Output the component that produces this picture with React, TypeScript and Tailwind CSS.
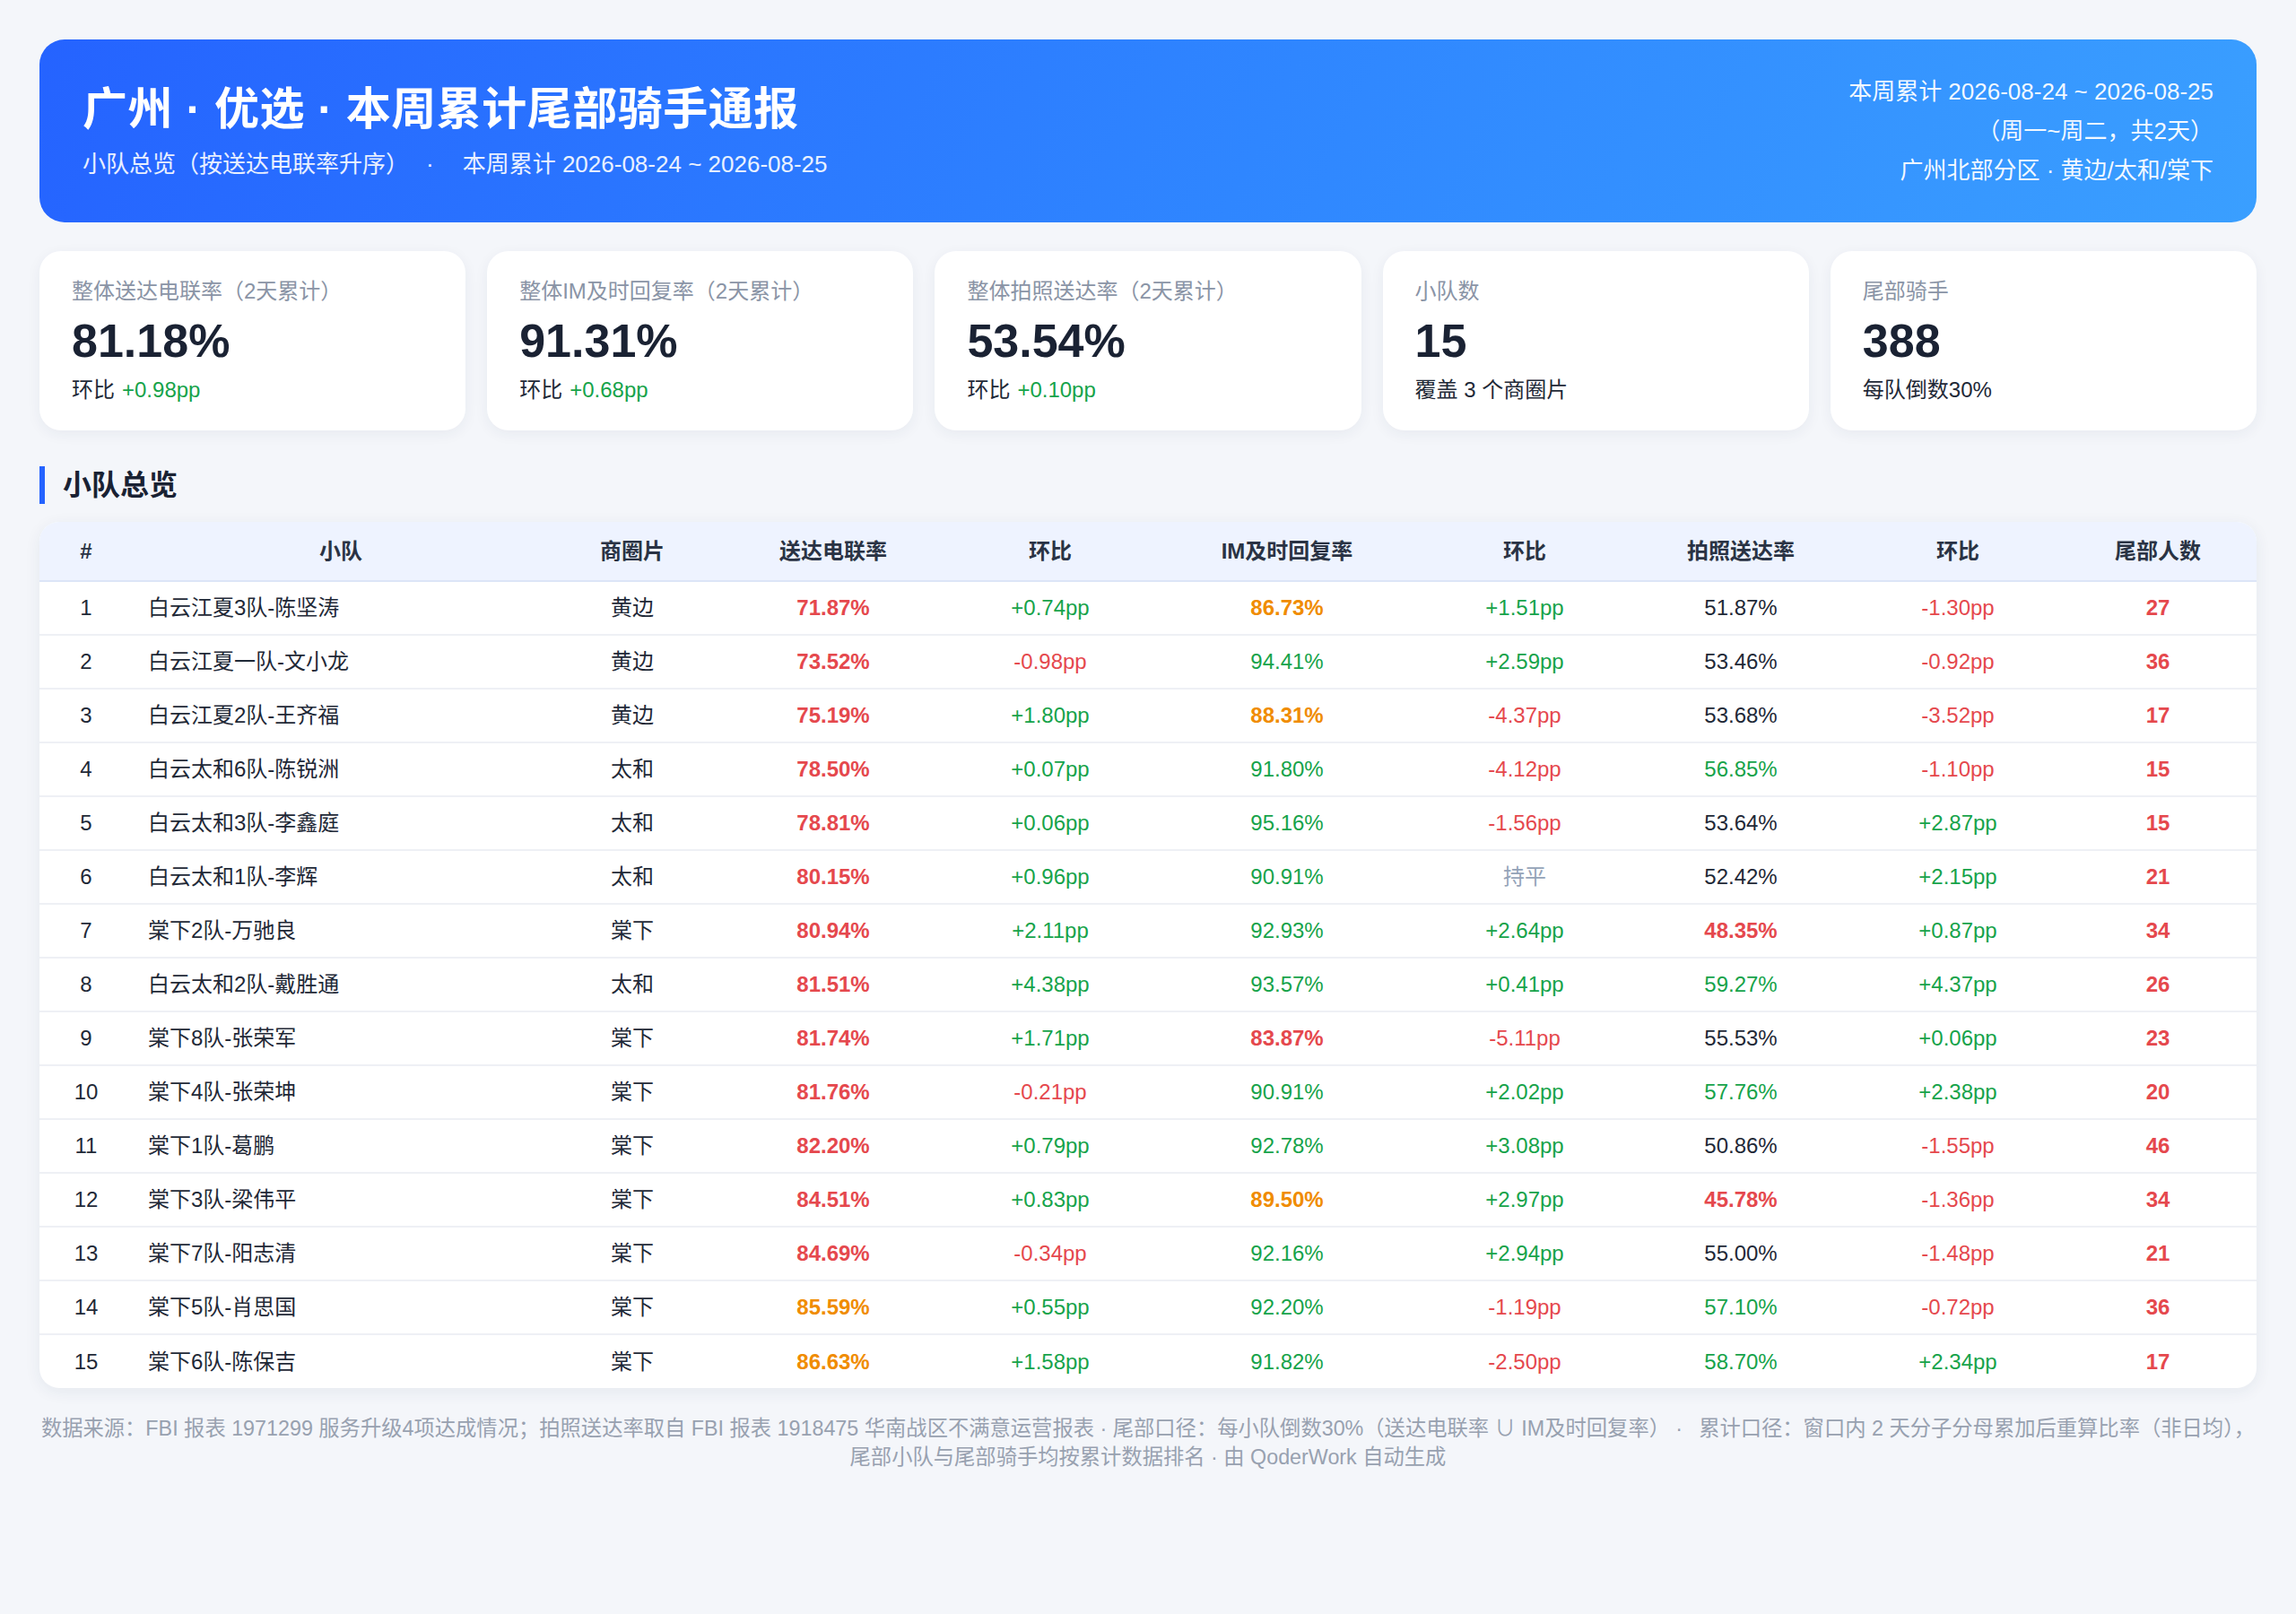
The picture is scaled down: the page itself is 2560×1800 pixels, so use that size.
import React from 'react';

type Row = {
  name: string;
  area: string;
  call: string;
  callMom: string;
  im: string;
  imMom: string;
  photo: string;
  photoMom: string;
  tail: number;
};

const rows: Row[] = [
  { name: '白云江夏3队-陈坚涛', area: '黄边', call: '71.87%', callMom: '+0.74pp', im: '86.73%', imMom: '+1.51pp', photo: '51.87%', photoMom: '-1.30pp', tail: 27 },
  { name: '白云江夏一队-文小龙', area: '黄边', call: '73.52%', callMom: '-0.98pp', im: '94.41%', imMom: '+2.59pp', photo: '53.46%', photoMom: '-0.92pp', tail: 36 },
  { name: '白云江夏2队-王齐福', area: '黄边', call: '75.19%', callMom: '+1.80pp', im: '88.31%', imMom: '-4.37pp', photo: '53.68%', photoMom: '-3.52pp', tail: 17 },
  { name: '白云太和6队-陈锐洲', area: '太和', call: '78.50%', callMom: '+0.07pp', im: '91.80%', imMom: '-4.12pp', photo: '56.85%', photoMom: '-1.10pp', tail: 15 },
  { name: '白云太和3队-李鑫庭', area: '太和', call: '78.81%', callMom: '+0.06pp', im: '95.16%', imMom: '-1.56pp', photo: '53.64%', photoMom: '+2.87pp', tail: 15 },
  { name: '白云太和1队-李辉', area: '太和', call: '80.15%', callMom: '+0.96pp', im: '90.91%', imMom: '持平', photo: '52.42%', photoMom: '+2.15pp', tail: 21 },
  { name: '棠下2队-万驰良', area: '棠下', call: '80.94%', callMom: '+2.11pp', im: '92.93%', imMom: '+2.64pp', photo: '48.35%', photoMom: '+0.87pp', tail: 34 },
  { name: '白云太和2队-戴胜通', area: '太和', call: '81.51%', callMom: '+4.38pp', im: '93.57%', imMom: '+0.41pp', photo: '59.27%', photoMom: '+4.37pp', tail: 26 },
  { name: '棠下8队-张荣军', area: '棠下', call: '81.74%', callMom: '+1.71pp', im: '83.87%', imMom: '-5.11pp', photo: '55.53%', photoMom: '+0.06pp', tail: 23 },
  { name: '棠下4队-张荣坤', area: '棠下', call: '81.76%', callMom: '-0.21pp', im: '90.91%', imMom: '+2.02pp', photo: '57.76%', photoMom: '+2.38pp', tail: 20 },
  { name: '棠下1队-葛鹏', area: '棠下', call: '82.20%', callMom: '+0.79pp', im: '92.78%', imMom: '+3.08pp', photo: '50.86%', photoMom: '-1.55pp', tail: 46 },
  { name: '棠下3队-梁伟平', area: '棠下', call: '84.51%', callMom: '+0.83pp', im: '89.50%', imMom: '+2.97pp', photo: '45.78%', photoMom: '-1.36pp', tail: 34 },
  { name: '棠下7队-阳志清', area: '棠下', call: '84.69%', callMom: '-0.34pp', im: '92.16%', imMom: '+2.94pp', photo: '55.00%', photoMom: '-1.48pp', tail: 21 },
  { name: '棠下5队-肖思国', area: '棠下', call: '85.59%', callMom: '+0.55pp', im: '92.20%', imMom: '-1.19pp', photo: '57.10%', photoMom: '-0.72pp', tail: 36 },
  { name: '棠下6队-陈保吉', area: '棠下', call: '86.63%', callMom: '+1.58pp', im: '91.82%', imMom: '-2.50pp', photo: '58.70%', photoMom: '+2.34pp', tail: 17 },
];

const RED = 'text-[#e5484d] font-bold';
const ORANGE = 'text-[#f08c00] font-bold';
const GREEN = 'text-[#16a34a]';
const DARK = 'text-[#1f2937]';

// 送达电联率 / IM: <85 red, 85-90 orange, else green
function rateClass(v: string) {
  const n = parseFloat(v);
  if (n < 85) return RED;
  if (n < 90) return ORANGE;
  return GREEN;
}

function photoClass(v: string) {
  const n = parseFloat(v);
  if (n < 50) return RED;
  if (n < 56) return DARK;
  return GREEN;
}

function momClass(v: string) {
  if (v.startsWith('+')) return 'text-[#16a34a]';
  if (v.startsWith('-')) return 'text-[#e5484d]';
  return 'text-[#94a3b8]';
}

const stats = [
  { label: '整体送达电联率（2天累计）', value: '81.18%', sub: '环比', delta: '+0.98pp' },
  { label: '整体IM及时回复率（2天累计）', value: '91.31%', sub: '环比', delta: '+0.68pp' },
  { label: '整体拍照送达率（2天累计）', value: '53.54%', sub: '环比', delta: '+0.10pp' },
  { label: '小队数', value: '15', sub: '覆盖 3 个商圈片', delta: '' },
  { label: '尾部骑手', value: '388', sub: '每队倒数30%', delta: '' },
];

const columns = [
  { label: '#', w: 'w-[104px]' },
  { label: '小队', w: 'w-[464px]' },
  { label: '商圈片', w: 'w-[186px]' },
  { label: '送达电联率', w: 'w-[262px]' },
  { label: '环比', w: 'w-[222px]' },
  { label: 'IM及时回复率', w: 'w-[306px]' },
  { label: '环比', w: 'w-[224px]' },
  { label: '拍照送达率', w: 'w-[258px]' },
  { label: '环比', w: 'w-[226px]' },
  { label: '尾部人数', w: 'w-[220px]' },
];

export default function App() {
  return (
    <div className="min-h-screen bg-[#f4f6fa] p-[44px] font-['Liberation_Sans','Noto_Sans_CJK_SC',sans-serif] text-[#1f2937]">
      {/* header */}
      <header className="h-[204px] rounded-[28px] bg-[linear-gradient(115deg,#2563ff_0%,#2f86ff_55%,#3a9fff_100%)] px-[48px] flex items-center justify-between text-white">
        <div>
          <h1 className="text-[50px] leading-[60px] font-bold tracking-[0.5px]">广州 · 优选 · 本周累计尾部骑手通报</h1>
          <p className="mt-[14px] text-[26px] leading-[34px] text-white/90">
            小队总览（按送达电联率升序）<span className="mx-[32px]">·</span>本周累计 2026-08-24 ~ 2026-08-25
          </p>
        </div>
        <div className="text-right text-[26px] leading-[44px] text-white/95">
          <div>本周累计 2026-08-24 ~ 2026-08-25</div>
          <div>（周一~周二，共2天）</div>
          <div>广州北部分区 · 黄边/太和/棠下</div>
        </div>
      </header>

      {/* stat cards */}
      <section className="mt-[32px] grid grid-cols-5 gap-[24px]">
        {stats.map((s) => (
          <div key={s.label} className="h-[200px] rounded-[24px] bg-white px-[36px] py-[29px] shadow-[0_4px_16px_rgba(30,50,90,0.06)]">
            <div className="text-[24px] leading-[32px] text-[#8a94a6]">{s.label}</div>
            <div className="mt-[9px] text-[52px] leading-[60px] font-bold text-[#1a2233]">{s.value}</div>
            <div className="mt-[9px] text-[24px] leading-[32px] text-[#1f2937]">
              {s.sub}
              {s.delta && <span className="ml-[8px] text-[#16a34a]">{s.delta}</span>}
            </div>
          </div>
        ))}
      </section>

      {/* section title */}
      <h2 className="mt-[40px] border-l-[6px] border-[#2563ff] pl-[20px] text-[32px] leading-[42px] font-bold text-[#1a2233]">小队总览</h2>

      {/* table */}
      <div className="mt-[20px] overflow-hidden rounded-[22px] bg-white shadow-[0_4px_18px_rgba(30,50,90,0.07)]">
        <table className="w-full table-fixed border-collapse text-[24px]">
          <thead>
            <tr className="bg-[#eef3ff] border-b-2 border-[#dce5f7]">
              {columns.map((c, i) => (
                <th key={i} className={`${c.w} h-[66px] text-center font-bold text-[#2a3344]`}>{c.label}</th>
              ))}
            </tr>
          </thead>
          <tbody>
            {rows.map((r, i) => (
              <tr key={r.name} className={i < rows.length - 1 ? 'border-b-2 border-[#eef0f5]' : ''}>
                <td className="h-[60px] text-center text-[#1f2937]">{i + 1}</td>
                <td className="pl-[17px] text-left text-[#1f2937]">{r.name}</td>
                <td className="text-center text-[#1f2937]">{r.area}</td>
                <td className={`text-center ${rateClass(r.call)}`}>{r.call}</td>
                <td className={`text-center ${momClass(r.callMom)}`}>{r.callMom}</td>
                <td className={`text-center ${rateClass(r.im)}`}>{r.im}</td>
                <td className={`text-center ${momClass(r.imMom)}`}>{r.imMom}</td>
                <td className={`text-center ${photoClass(r.photo)}`}>{r.photo}</td>
                <td className={`text-center ${momClass(r.photoMom)}`}>{r.photoMom}</td>
                <td className="text-center font-bold text-[#e5484d]">{r.tail}</td>
              </tr>
            ))}
          </tbody>
        </table>
      </div>

      {/* footer note */}
      <footer className="mt-[29px] text-center text-[23.3px] leading-[32px] text-[#98a1b0]">
        <div className="whitespace-nowrap">
          数据来源：FBI 报表 1971299 服务升级4项达成情况；拍照送达率取自 FBI 报表 1918475 华南战区不满意运营报表 · 尾部口径：每小队倒数30%（送达电联率 ∪ IM及时回复率）<span className="mx-[18px]">·</span>累计口径：窗口内 2 天分子分母累加后重算比率（非日均），
        </div>
        <div>尾部小队与尾部骑手均按累计数据排名 · 由 QoderWork 自动生成</div>
      </footer>
    </div>
  );
}
